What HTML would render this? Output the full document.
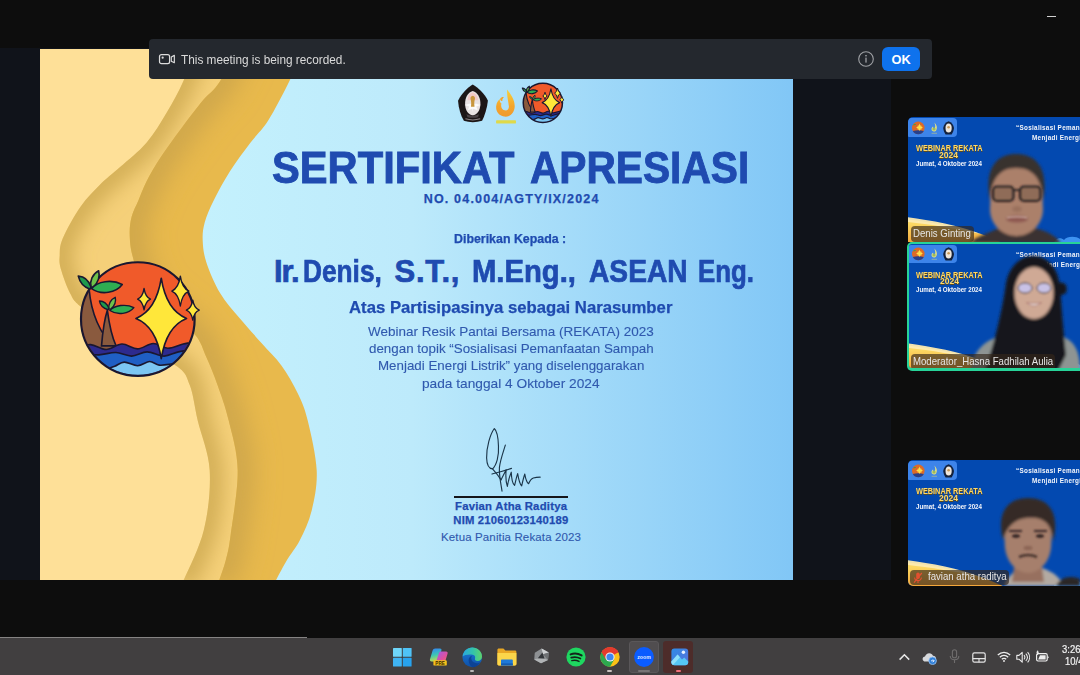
<!DOCTYPE html>
<html lang="id">
<head>
<meta charset="utf-8">
<title>Zoom Meeting</title>
<style>
*{box-sizing:border-box;margin:0;padding:0}
html,body{width:1080px;height:675px;overflow:hidden;background:#0d0d0d;font-family:"Liberation Sans",sans-serif;}
.abs{position:absolute}
#share{left:0;top:48px;width:891px;height:532px;background:#10131a}
#cert{left:40.3px;top:48.5px;width:752.7px;height:531.2px;overflow:hidden;background:#fee098}
#cert svg.bg{position:absolute;left:0;top:0}
.ct{position:absolute;left:0;width:942px;text-align:center;color:#1f4cb0;white-space:nowrap;font-weight:bold}
/* certificate centre x = 511 => in cert coords 471 => width 942 */
#banner{left:149.4px;top:39.4px;width:782.6px;height:39.5px;background:#24282e;border-radius:4px}
#okbtn{left:733px;top:8px;width:37.6px;height:23.2px;border-radius:6px;background:#0e72ed;color:#fff;font-weight:bold;font-size:12.8px;text-align:center;line-height:25px}
#taskbar{left:0;top:637.7px;width:1080px;height:38px;background:#413f40}
.tx{position:absolute;white-space:nowrap;line-height:1;transform-origin:0 0}
.tile{overflow:hidden;background:#0349b0;border-radius:5px}
</style>
</head>
<body>
<div id="share" class="abs"></div>
<div id="cert" class="abs">
<!--CERTBG_S--><svg class="bg" width="753" height="532" viewBox="0 0 753 532">
<defs>
<linearGradient id="gb" x1="0" y1="0" x2="1" y2="0"><stop offset="0" stop-color="#c4f1fd"/><stop offset="0.35" stop-color="#bdeafb"/><stop offset="1" stop-color="#80c6f6"/></linearGradient>
<filter id="bl1" filterUnits="userSpaceOnUse" x="-60" y="-60" width="900" height="700"><feGaussianBlur stdDeviation="10"/></filter>
<filter id="bl2" filterUnits="userSpaceOnUse" x="-60" y="-60" width="900" height="700"><feGaussianBlur stdDeviation="13"/></filter>
<clipPath id="c1"><path d="M157.7 -4.5 C155.3 1.7 148.3 21.2 143.2 32.5 C138.1 43.8 133.0 53.0 126.9 63.2 C120.8 73.4 114.3 84.5 106.5 93.7 C98.7 102.8 87.9 111.0 80.1 118.1 C72.3 125.1 66.3 129.4 59.7 136.0 C53.1 142.6 46.9 148.6 40.7 157.5 C34.5 166.4 26.2 181.3 22.7 189.5 C19.2 197.7 20.0 201.5 19.7 206.5 C19.4 211.5 19.0 213.2 20.7 219.5 C22.5 225.8 26.8 238.1 30.2 244.5 C33.7 250.9 32.3 250.4 41.4 258.2 C50.5 266.0 69.0 281.8 84.7 291.5 C100.4 301.2 124.9 309.1 135.7 316.5 C146.5 323.9 146.0 326.7 149.7 335.9 C153.4 345.1 154.4 357.2 157.7 371.5 C161.0 385.8 168.7 403.2 169.7 421.5 C170.7 439.8 168.4 462.5 163.7 481.5 C159.0 500.5 145.4 526.5 141.7 535.5 L760 540 L760 -5 Z"/></clipPath>
<clipPath id="c2"><path d="M197.7 -4.5 C194.7 1.7 185.9 22.9 179.9 32.5 C173.9 42.1 167.9 45.2 161.5 53.0 C155.1 60.8 148.0 70.3 141.2 79.5 C134.4 88.7 126.6 99.2 120.8 108.0 C115.0 116.8 110.2 125.2 106.5 132.5 C102.8 139.8 100.9 145.7 98.4 151.5 C95.9 157.3 93.2 161.8 91.7 167.5 C90.2 173.2 89.5 178.8 89.7 185.5 C89.9 192.2 90.2 198.2 92.7 207.5 C95.2 216.8 98.5 231.7 104.7 241.5 C110.9 251.3 121.3 259.1 129.7 266.5 C138.1 273.9 149.1 278.9 155.2 285.9 C161.3 292.8 162.7 299.9 166.4 308.2 C170.1 316.5 173.8 325.3 177.5 335.9 C181.2 346.4 185.3 357.2 188.7 371.5 C192.1 385.8 197.4 402.5 197.7 421.5 C198.0 440.5 192.7 470.5 190.7 485.5 C188.7 500.5 187.9 503.2 185.7 511.5 C183.5 519.8 179.0 531.5 177.7 535.5 L760 540 L760 -5 Z"/></clipPath>
</defs>
<rect width="753" height="532" fill="#fee098"/>
<path d="M157.7 -4.5 C155.3 1.7 148.3 21.2 143.2 32.5 C138.1 43.8 133.0 53.0 126.9 63.2 C120.8 73.4 114.3 84.5 106.5 93.7 C98.7 102.8 87.9 111.0 80.1 118.1 C72.3 125.1 66.3 129.4 59.7 136.0 C53.1 142.6 46.9 148.6 40.7 157.5 C34.5 166.4 26.2 181.3 22.7 189.5 C19.2 197.7 20.0 201.5 19.7 206.5 C19.4 211.5 19.0 213.2 20.7 219.5 C22.5 225.8 26.8 238.1 30.2 244.5 C33.7 250.9 32.3 250.4 41.4 258.2 C50.5 266.0 69.0 281.8 84.7 291.5 C100.4 301.2 124.9 309.1 135.7 316.5 C146.5 323.9 146.0 326.7 149.7 335.9 C153.4 345.1 154.4 357.2 157.7 371.5 C161.0 385.8 168.7 403.2 169.7 421.5 C170.7 439.8 168.4 462.5 163.7 481.5 C159.0 500.5 145.4 526.5 141.7 535.5 L760 540 L760 -5 Z" fill="#f5d079"/>
<g clip-path="url(#c1)"><path d="M157.7 -4.5 C155.3 1.7 148.3 21.2 143.2 32.5 C138.1 43.8 133.0 53.0 126.9 63.2 C120.8 73.4 114.3 84.5 106.5 93.7 C98.7 102.8 87.9 111.0 80.1 118.1 C72.3 125.1 66.3 129.4 59.7 136.0 C53.1 142.6 46.9 148.6 40.7 157.5 C34.5 166.4 26.2 181.3 22.7 189.5 C19.2 197.7 20.0 201.5 19.7 206.5 C19.4 211.5 19.0 213.2 20.7 219.5 C22.5 225.8 26.8 238.1 30.2 244.5 C33.7 250.9 32.3 250.4 41.4 258.2 C50.5 266.0 69.0 281.8 84.7 291.5 C100.4 301.2 124.9 309.1 135.7 316.5 C146.5 323.9 146.0 326.7 149.7 335.9 C153.4 345.1 154.4 357.2 157.7 371.5 C161.0 385.8 168.7 403.2 169.7 421.5 C170.7 439.8 168.4 462.5 163.7 481.5 C159.0 500.5 145.4 526.5 141.7 535.5" fill="none" stroke="#d2ad54" stroke-width="26" filter="url(#bl1)"/></g>
<path d="M197.7 -4.5 C194.7 1.7 185.9 22.9 179.9 32.5 C173.9 42.1 167.9 45.2 161.5 53.0 C155.1 60.8 148.0 70.3 141.2 79.5 C134.4 88.7 126.6 99.2 120.8 108.0 C115.0 116.8 110.2 125.2 106.5 132.5 C102.8 139.8 100.9 145.7 98.4 151.5 C95.9 157.3 93.2 161.8 91.7 167.5 C90.2 173.2 89.5 178.8 89.7 185.5 C89.9 192.2 90.2 198.2 92.7 207.5 C95.2 216.8 98.5 231.7 104.7 241.5 C110.9 251.3 121.3 259.1 129.7 266.5 C138.1 273.9 149.1 278.9 155.2 285.9 C161.3 292.8 162.7 299.9 166.4 308.2 C170.1 316.5 173.8 325.3 177.5 335.9 C181.2 346.4 185.3 357.2 188.7 371.5 C192.1 385.8 197.4 402.5 197.7 421.5 C198.0 440.5 192.7 470.5 190.7 485.5 C188.7 500.5 187.9 503.2 185.7 511.5 C183.5 519.8 179.0 531.5 177.7 535.5 L760 540 L760 -5 Z" fill="#e8b94c"/>
<g clip-path="url(#c2)"><path d="M197.7 -4.5 C194.7 1.7 185.9 22.9 179.9 32.5 C173.9 42.1 167.9 45.2 161.5 53.0 C155.1 60.8 148.0 70.3 141.2 79.5 C134.4 88.7 126.6 99.2 120.8 108.0 C115.0 116.8 110.2 125.2 106.5 132.5 C102.8 139.8 100.9 145.7 98.4 151.5 C95.9 157.3 93.2 161.8 91.7 167.5 C90.2 173.2 89.5 178.8 89.7 185.5 C89.9 192.2 90.2 198.2 92.7 207.5 C95.2 216.8 98.5 231.7 104.7 241.5 C110.9 251.3 121.3 259.1 129.7 266.5 C138.1 273.9 149.1 278.9 155.2 285.9 C161.3 292.8 162.7 299.9 166.4 308.2 C170.1 316.5 173.8 325.3 177.5 335.9 C181.2 346.4 185.3 357.2 188.7 371.5 C192.1 385.8 197.4 402.5 197.7 421.5 C198.0 440.5 192.7 470.5 190.7 485.5 C188.7 500.5 187.9 503.2 185.7 511.5 C183.5 519.8 179.0 531.5 177.7 535.5" fill="none" stroke="#cea64b" stroke-width="32" filter="url(#bl2)"/></g>
<path d="M265.7 -4.5 C263.0 1.5 255.9 18.8 249.7 31.5 C243.4 44.2 234.8 61.1 228.2 71.5 C221.6 81.9 216.8 85.2 210.4 93.7 C204.0 102.1 196.1 112.6 190.0 122.2 C183.9 131.8 177.9 142.9 173.7 151.5 C169.5 160.1 166.5 166.8 164.7 173.5 C162.9 180.2 162.4 184.8 162.7 191.5 C163.0 198.2 163.5 204.7 166.4 213.5 C169.3 222.3 174.6 235.0 180.2 244.3 C185.8 253.6 192.8 261.0 199.7 269.3 C206.6 277.6 214.8 286.4 221.7 294.3 C228.6 302.2 235.4 308.2 241.4 316.5 C247.4 324.8 253.3 335.1 257.7 344.3 C262.1 353.5 264.5 358.6 267.7 371.5 C270.9 384.4 276.0 406.5 276.7 421.5 C277.4 436.5 274.5 449.8 271.7 461.5 C268.9 473.2 263.9 483.2 259.7 491.5 C255.5 499.8 251.0 504.2 246.7 511.5 C242.4 518.8 235.9 531.5 233.7 535.5 L760 540 L760 -5 Z" fill="url(#gb)"/>
</svg><!--CERTBG_E-->
<!--CERTLOGO_S--><svg class="abs" style="left:19.7px;top:201.5px" width="160" height="140" viewBox="0 0 771 675">
<defs><clipPath id="brc"><circle cx="375" cy="333" r="270"/></clipPath></defs>
<circle cx="375" cy="333" r="274" fill="#f05a2a"/>
<g clip-path="url(#brc)">
 <path d="M100 200 L140 188 C150 300 190 400 262 470 L262 500 L90 500Z" fill="#8a5a3e" stroke="#1a1730" stroke-width="7.800000000000001"/>
 <path d="M228 290 C236 350 246 410 270 462 L200 462 C205 400 212 340 228 290Z" fill="#8a5a3e" stroke="#1a1730" stroke-width="7.800000000000001"/>
 <path d="M80.0 470.0 C91.3 467.7 123.9 454.7 147.7 456.3 C171.5 457.9 197.9 480.0 223.0 479.5 C248.1 479.0 273.3 453.9 298.5 453.4 C323.7 452.9 348.9 477.1 374.0 476.6 C399.1 476.1 424.8 451.0 449.0 450.5 C473.2 450.0 494.8 473.2 519.0 473.7 C543.2 474.2 568.8 459.0 594.0 453.4 C619.2 447.8 657.3 442.2 670.0 440.0 L670 700 L80 700Z" fill="#2d2a8e" stroke="#1a1730" stroke-width="7.800000000000001"/>
 <path d="M110.0 500.0 C123.0 500.9 161.4 506.6 188.0 505.6 C214.6 504.6 243.3 493.0 269.5 494.0 C295.7 495.0 319.9 511.9 345.0 511.4 C370.1 510.9 393.9 491.0 420.0 491.0 C446.1 491.0 476.3 511.4 501.5 511.4 C526.7 511.4 546.2 496.2 571.0 491.0 C595.8 485.8 636.8 481.8 650.0 480.0 L650 700 L110 700Z" fill="#1f5fc4" stroke="#1a1730" stroke-width="7.800000000000001"/>
 <path d="M220.0 575.0 C227.3 572.6 248.7 566.5 263.7 560.7 C278.7 554.9 291.6 540.9 310.0 540.4 C328.4 539.9 353.7 558.3 374.0 557.8 C394.3 557.3 414.7 538.0 432.0 537.5 C449.3 537.0 460.0 552.9 478.0 555.0 C496.0 557.1 529.7 550.8 540.0 550.0 L540 700 L220 700Z" fill="#7cc6f2" stroke="#1a1730" stroke-width="7.800000000000001"/>
</g>
<circle cx="375" cy="333" r="274" fill="none" stroke="#1a1730" stroke-width="10.4"/>
<path d="M488 136 Q512.4 291.2 610 330 Q512.4 368.8 488 524 Q463.6 368.8 366 330 Q463.6 291.2 488 136Z" fill="#ffe73a" stroke="#1a1730" stroke-width="7.800000000000001" stroke-linejoin="round"/>
<path d="M405 185 Q411.2 226.6 436 237 Q411.2 247.4 405 289 Q398.8 247.4 374 237 Q398.8 226.6 405 185Z" fill="#ffe73a" stroke="#1a1730" stroke-width="6.5" stroke-linejoin="round"/>
<path d="M580 126 Q588.2 183.6 621 198 Q588.2 212.4 580 270 Q571.8 212.4 539 198 Q571.8 183.6 580 126Z" fill="#ffe73a" stroke="#1a1730" stroke-width="6.5" stroke-linejoin="round"/>
<path d="M640 242 Q646.2 280.4 671 290 Q646.2 299.6 640 338 Q633.8 299.6 609 290 Q633.8 280.4 640 242Z" fill="#ffe73a" stroke="#1a1730" stroke-width="6.5" stroke-linejoin="round"/>
<path d="M142 188 C120 180 96 160 88 126 C120 128 140 150 150 180Z" fill="#1f9a4c" stroke="#1a1730" stroke-width="7.800000000000001" stroke-linejoin="round"/>
<path d="M150 178 C142 150 156 116 186 100 C194 130 180 160 160 180Z" fill="#6fc24a" stroke="#1a1730" stroke-width="7.800000000000001" stroke-linejoin="round"/>
<path d="M152 186 C180 150 250 140 300 166 C270 206 200 220 152 186Z" fill="#2fae52" stroke="#1a1730" stroke-width="7.800000000000001" stroke-linejoin="round"/>
<path d="M232 288 C212 282 194 268 190 246 C212 246 228 262 236 282Z" fill="#1f9a4c" stroke="#1a1730" stroke-width="6.5" stroke-linejoin="round"/>
<path d="M236 284 C232 262 244 238 266 228 C272 250 260 272 244 286Z" fill="#6fc24a" stroke="#1a1730" stroke-width="6.5" stroke-linejoin="round"/>
<path d="M240 292 C262 266 318 258 356 278 C332 308 276 316 240 292Z" fill="#2fae52" stroke="#1a1730" stroke-width="6.5" stroke-linejoin="round"/>
</svg><svg class="abs" style="left:475.9px;top:30.1px" width="55.2" height="48.3" viewBox="0 0 771 675">
<defs><clipPath id="src"><circle cx="375" cy="333" r="270"/></clipPath></defs>
<circle cx="375" cy="333" r="274" fill="#f05a2a"/>
<g clip-path="url(#src)">
 <path d="M100 200 L140 188 C150 300 190 400 262 470 L262 500 L90 500Z" fill="#8a5a3e" stroke="#1a1730" stroke-width="15.600000000000001"/>
 <path d="M228 290 C236 350 246 410 270 462 L200 462 C205 400 212 340 228 290Z" fill="#8a5a3e" stroke="#1a1730" stroke-width="15.600000000000001"/>
 <path d="M80.0 470.0 C91.3 467.7 123.9 454.7 147.7 456.3 C171.5 457.9 197.9 480.0 223.0 479.5 C248.1 479.0 273.3 453.9 298.5 453.4 C323.7 452.9 348.9 477.1 374.0 476.6 C399.1 476.1 424.8 451.0 449.0 450.5 C473.2 450.0 494.8 473.2 519.0 473.7 C543.2 474.2 568.8 459.0 594.0 453.4 C619.2 447.8 657.3 442.2 670.0 440.0 L670 700 L80 700Z" fill="#2d2a8e" stroke="#1a1730" stroke-width="15.600000000000001"/>
 <path d="M110.0 500.0 C123.0 500.9 161.4 506.6 188.0 505.6 C214.6 504.6 243.3 493.0 269.5 494.0 C295.7 495.0 319.9 511.9 345.0 511.4 C370.1 510.9 393.9 491.0 420.0 491.0 C446.1 491.0 476.3 511.4 501.5 511.4 C526.7 511.4 546.2 496.2 571.0 491.0 C595.8 485.8 636.8 481.8 650.0 480.0 L650 700 L110 700Z" fill="#1f5fc4" stroke="#1a1730" stroke-width="15.600000000000001"/>
 <path d="M220.0 575.0 C227.3 572.6 248.7 566.5 263.7 560.7 C278.7 554.9 291.6 540.9 310.0 540.4 C328.4 539.9 353.7 558.3 374.0 557.8 C394.3 557.3 414.7 538.0 432.0 537.5 C449.3 537.0 460.0 552.9 478.0 555.0 C496.0 557.1 529.7 550.8 540.0 550.0 L540 700 L220 700Z" fill="#7cc6f2" stroke="#1a1730" stroke-width="15.600000000000001"/>
</g>
<circle cx="375" cy="333" r="274" fill="none" stroke="#1a1730" stroke-width="20.8"/>
<path d="M488 136 Q512.4 291.2 610 330 Q512.4 368.8 488 524 Q463.6 368.8 366 330 Q463.6 291.2 488 136Z" fill="#ffe73a" stroke="#1a1730" stroke-width="15.600000000000001" stroke-linejoin="round"/>
<path d="M405 185 Q411.2 226.6 436 237 Q411.2 247.4 405 289 Q398.8 247.4 374 237 Q398.8 226.6 405 185Z" fill="#ffe73a" stroke="#1a1730" stroke-width="13.0" stroke-linejoin="round"/>
<path d="M580 126 Q588.2 183.6 621 198 Q588.2 212.4 580 270 Q571.8 212.4 539 198 Q571.8 183.6 580 126Z" fill="#ffe73a" stroke="#1a1730" stroke-width="13.0" stroke-linejoin="round"/>
<path d="M640 242 Q646.2 280.4 671 290 Q646.2 299.6 640 338 Q633.8 299.6 609 290 Q633.8 280.4 640 242Z" fill="#ffe73a" stroke="#1a1730" stroke-width="13.0" stroke-linejoin="round"/>
<path d="M142 188 C120 180 96 160 88 126 C120 128 140 150 150 180Z" fill="#1f9a4c" stroke="#1a1730" stroke-width="15.600000000000001" stroke-linejoin="round"/>
<path d="M150 178 C142 150 156 116 186 100 C194 130 180 160 160 180Z" fill="#6fc24a" stroke="#1a1730" stroke-width="15.600000000000001" stroke-linejoin="round"/>
<path d="M152 186 C180 150 250 140 300 166 C270 206 200 220 152 186Z" fill="#2fae52" stroke="#1a1730" stroke-width="15.600000000000001" stroke-linejoin="round"/>
<path d="M232 288 C212 282 194 268 190 246 C212 246 228 262 236 282Z" fill="#1f9a4c" stroke="#1a1730" stroke-width="13.0" stroke-linejoin="round"/>
<path d="M236 284 C232 262 244 238 266 228 C272 250 260 272 244 286Z" fill="#6fc24a" stroke="#1a1730" stroke-width="13.0" stroke-linejoin="round"/>
<path d="M240 292 C262 266 318 258 356 278 C332 308 276 316 240 292Z" fill="#2fae52" stroke="#1a1730" stroke-width="13.0" stroke-linejoin="round"/>
</svg><!--CERTLOGO_E-->
<!--TOPLOGOS_S--><svg class="abs" style="left:409.7px;top:29.5px" width="80" height="52" viewBox="0 0 1038 675">
<defs><filter id="tb" x="-10%" y="-10%" width="120%" height="120%"><feGaussianBlur stdDeviation="5"/></filter>
<linearGradient id="fl" x1="0" y1="0" x2="0" y2="1"><stop offset="0" stop-color="#f7d23a"/><stop offset="0.6" stop-color="#f4a52c"/><stop offset="1" stop-color="#ee9a2e"/></linearGradient></defs>
<g filter="url(#tb)">
<path d="M295 84 C360 120 450 200 492 296 C480 400 450 490 416 556 C340 580 250 580 180 556 C140 490 112 400 104 296 C150 200 230 120 295 84Z" fill="#1e1718"/>
<path d="M295 170 C360 188 398 262 394 345 C390 425 352 478 295 486 C238 478 200 425 196 345 C192 262 230 188 295 170Z" fill="#e9e3e3"/>
<path d="M295 184 C340 196 364 240 362 290 L228 290 C226 240 250 196 295 184Z" fill="#f2c9c6"/>
<path d="M190 350 L250 370 L230 420 L290 400 L295 440 L300 400 L360 420 L340 370 L400 350 L340 335 L250 335Z" fill="#fbfbfb"/>
<path d="M295 230 C318 232 330 256 322 280 C316 300 312 330 318 372 L272 372 C278 330 274 300 268 280 C260 256 272 232 295 230Z" fill="#c8963e"/>
<path d="M215 470 C260 492 330 492 375 470 L365 505 C330 520 260 520 225 505Z" fill="#4a4244"/>
<path d="M200 530 C260 548 330 548 392 530" stroke="#8a8284" stroke-width="14" fill="none"/>
</g>
<g filter="url(#tb)">
<path d="M742 150 C800 230 850 300 838 390 C826 470 760 512 700 500 C630 488 590 430 600 360 C606 318 622 290 650 272 C640 300 650 322 668 330 C656 370 670 410 708 420 C742 428 768 404 764 366 C758 300 736 240 742 150Z" fill="url(#fl)"/>
<path d="M650 272 C664 250 684 244 700 250 C684 262 676 280 680 300 C664 300 652 290 650 272Z" fill="#f4a52c"/>
<rect x="598" y="548" width="258" height="42" rx="6" fill="#dfd94a"/>
</g>
</svg><!--TOPLOGOS_E-->
<!--SIG_S--><svg class="abs" style="left:429.7px;top:371.5px" width="90" height="80" viewBox="0 0 759 675">
<g fill="none" stroke="#1b3549" stroke-width="9.5" stroke-linecap="round" stroke-linejoin="round">
<path d="M205 72 C170 120 138 230 140 320 C142 380 160 410 190 412 C225 380 245 300 240 220 C238 150 225 90 205 72"/>
<path d="M190 412 C215 440 240 470 262 505"/>
<path d="M298 212 C280 270 255 340 248 400 C244 470 262 540 270 600"/>
<path d="M185 456 C240 440 300 425 350 408"/>
<path d="M262 505 C280 470 295 440 305 420 C300 470 305 530 315 560 C322 520 335 470 348 440 C350 490 362 540 376 552 C384 520 392 480 402 452 C410 500 424 545 436 556 C444 520 452 486 462 456 C470 500 482 530 494 538 C504 515 518 496 534 490 C552 484 572 482 592 482"/>
</g></svg>
<div class="abs" style="left:414.2px;top:447.5px;width:113.4px;height:2px;background:#15151a"></div><!--SIG_E-->
<!--CERTTEXT_S--><div class="tx" style="left:231.7px;top:97.4px;font-size:44.5px;font-weight:bold;color:#1f4bb0;-webkit-text-stroke:0.9px #1f4bb0;transform:scaleX(0.9368);">SERTIFIKAT</div>
<div class="tx" style="left:489.9px;top:97.4px;font-size:44.5px;font-weight:bold;color:#1f4bb0;-webkit-text-stroke:0.9px #1f4bb0;transform:scaleX(0.9138);">APRESIASI</div>
<div class="tx" style="left:383.4px;top:144.5px;font-size:12.5px;font-weight:bold;color:#1f4bb0;-webkit-text-stroke:0.25px #1f4bb0;letter-spacing:1.182px;">NO. 04.004/AGTY/IX/2024</div>
<div class="tx" style="left:414.2px;top:185.6px;font-size:11.9px;font-weight:bold;color:#1f4bb0;-webkit-text-stroke:0.25px #1f4bb0;transform:scaleX(1.0416);">Diberikan Kepada :</div>
<div class="tx" style="left:233.6px;top:207.7px;font-size:31px;font-weight:bold;color:#1f4bb0;-webkit-text-stroke:0.7px #1f4bb0;letter-spacing:-0.947px;">Ir.</div>
<div class="tx" style="left:262.9px;top:207.7px;font-size:31px;font-weight:bold;color:#1f4bb0;-webkit-text-stroke:0.7px #1f4bb0;transform:scaleX(0.8470);">Denis,</div>
<div class="tx" style="left:354.3px;top:207.7px;font-size:31px;font-weight:bold;color:#1f4bb0;-webkit-text-stroke:0.7px #1f4bb0;letter-spacing:0.696px;">S.T.,</div>
<div class="tx" style="left:431.3px;top:207.7px;font-size:31px;font-weight:bold;color:#1f4bb0;-webkit-text-stroke:0.7px #1f4bb0;transform:scaleX(0.9436);">M.Eng.,</div>
<div class="tx" style="left:549.1px;top:207.7px;font-size:31px;font-weight:bold;color:#1f4bb0;-webkit-text-stroke:0.7px #1f4bb0;transform:scaleX(0.9086);">ASEAN</div>
<div class="tx" style="left:657.7px;top:207.7px;font-size:31px;font-weight:bold;color:#1f4bb0;-webkit-text-stroke:0.7px #1f4bb0;transform:scaleX(0.8337);">Eng.</div>
<div class="tx" style="left:309.0px;top:251.7px;font-size:16.7px;font-weight:bold;color:#1f4bb0;-webkit-text-stroke:0.25px #1f4bb0;transform:scaleX(1.0019);">Atas Partisipasinya sebagai Narasumber</div>
<div class="tx" style="left:328.0px;top:276.1px;font-size:13.5px;font-weight:normal;color:#3059ae;-webkit-text-stroke:0.12px #3059ae;transform:scaleX(0.9994);">Webinar Resik Pantai Bersama (REKATA) 2023</div>
<div class="tx" style="left:329.0px;top:293.4px;font-size:13.5px;font-weight:normal;color:#3059ae;-webkit-text-stroke:0.12px #3059ae;transform:scaleX(0.9905);">dengan topik “Sosialisasi Pemanfaatan Sampah</div>
<div class="tx" style="left:337.4px;top:310.8px;font-size:13.5px;font-weight:normal;color:#3059ae;-webkit-text-stroke:0.12px #3059ae;transform:scaleX(0.9885);">Menjadi Energi Listrik” yang diselenggarakan</div>
<div class="tx" style="left:381.4px;top:328.4px;font-size:13.5px;font-weight:normal;color:#3059ae;-webkit-text-stroke:0.12px #3059ae;transform:scaleX(1.0155);">pada tanggal 4 Oktober 2024</div>
<div class="tx" style="left:414.7px;top:452.9px;font-size:11.3px;font-weight:bold;color:#1f4bb0;-webkit-text-stroke:0.25px #1f4bb0;letter-spacing:0.247px;">Favian Atha Raditya</div>
<div class="tx" style="left:413.0px;top:466.6px;font-size:11.3px;font-weight:bold;color:#1f4bb0;-webkit-text-stroke:0.25px #1f4bb0;letter-spacing:0.182px;">NIM 21060123140189</div>
<div class="tx" style="left:400.7px;top:483.3px;font-size:11.5px;font-weight:normal;color:#3059ae;-webkit-text-stroke:0.12px #3059ae;letter-spacing:0.132px;">Ketua Panitia Rekata 2023</div>
<!--CERTTEXT_E-->
</div>
<div id="banner" class="abs">
<!--BANNER_S-->
<svg class="abs" style="left:8.8px;top:13.7px" width="19" height="13.3" viewBox="0 0 20 14"><rect x="1.6" y="1.6" width="10.6" height="9.6" rx="2" fill="none" stroke="#dcdcdc" stroke-width="1.3"/><circle cx="4.9" cy="4.9" r="1.15" fill="#dcdcdc"/><path d="M14 4.2 L17.2 2.5 V10.3 L14 8.6 Z" fill="none" stroke="#dcdcdc" stroke-width="1.2" stroke-linejoin="round"/></svg>
<div class="tx" id="bantx" style="left:31.4px;top:14.3px;font-size:12.3px;color:#dadada;transform:scaleX(0.96)">This meeting is being recorded.</div>
<svg class="abs" style="left:708px;top:10.5px" width="18" height="18" viewBox="0 0 18 18"><circle cx="9" cy="9" r="7.3" fill="none" stroke="#9fa1a5" stroke-width="1.1"/><rect x="8.4" y="7.6" width="1.2" height="5" fill="#a9abaf"/><rect x="8.3" y="5" width="1.4" height="1.4" fill="#a9abaf"/></svg>
<div id="okbtn" class="abs">OK</div>
<!--BANNER_E-->
</div>
<!--WINCTL_S--><div class="abs" style="left:1046.5px;top:15.5px;width:9.5px;height:1.2px;background:#d0d0d0"></div><!--WINCTL_E-->
<!--TILES_S--><svg width="0" height="0" style="position:absolute"><defs>
<filter id="fb1" x="-30%" y="-30%" width="160%" height="160%"><feGaussianBlur stdDeviation="1.6"/></filter>
<filter id="fb2" x="-30%" y="-30%" width="160%" height="160%"><feGaussianBlur stdDeviation="0.8"/></filter>
</defs></svg><div class="abs tile" style="left:908.2px;top:116.7px;width:180px;height:125.6px;border-radius:5px 0 0 0">
<div class="abs" style="left:0;top:1.6px;width:48.6px;height:18.6px;background:#3d84ea;border-radius:3px 4px 4px 1px"></div>
<svg class="abs" style="left:0;top:0" width="50" height="22" viewBox="0 0 50 22">
 <circle cx="10.3" cy="10.9" r="6.3" fill="#dd6a28"/><circle cx="11.6" cy="10.6" r="2.6" fill="#f6b23a" opacity="0.8"/><path d="M4.8 14 Q10 12.6 15.8 14 A6.3 6.3 0 0 1 4.8 14Z" fill="#27408c"/><path d="M11.5 6.5 L12.6 9.4 15 10.4 12.6 11.4 11.5 14 10.4 11.4 8 10.4 10.4 9.4Z" fill="#ffe14a"/><path d="M5 8 Q6.5 6.5 8.2 7.2 Q7 8.6 5 8Z" fill="#3aa34a"/>
 <path d="M26.3 5.6 C28.8 8 29.6 10.6 28.4 13 C27.6 14.6 25.4 15.2 24.2 13.8 C22.8 12.2 23.8 10 25.2 9.4 C24.8 10.8 25.6 11.8 26.4 11.4 C27.6 10.8 27.4 8 26.3 5.6Z" fill="#d9dc8a"/><circle cx="26" cy="12" r="1.6" fill="#9dbb58"/><rect x="23.6" y="15.8" width="5.4" height="0.9" fill="#b9c486" opacity="0.7"/>
 <path d="M40.6 4.2 C43.4 5.4 45.6 7.6 46 11 C45.8 13.6 44.8 15.8 43.6 17.4 L37.6 17.4 C36.4 15.8 35.4 13.6 35.2 11 C35.6 7.6 37.8 5.4 40.6 4.2Z" fill="#13213c"/><ellipse cx="40.6" cy="11" rx="3.1" ry="4.6" fill="#efe6da"/><circle cx="40.6" cy="10.2" r="1.3" fill="#c99a5a"/>
</svg>
<div class="tx vt" style="left:8px;top:26.6px;font-size:9.7px;color:#ffd866;font-weight:bold;transform:scaleX(0.756);text-shadow:0.4px 0.6px 0 #5a4a20">WEBINAR REKATA</div>
<div class="tx vt" style="left:31.3px;top:34.2px;font-size:9.2px;color:#ffd866;font-weight:bold;transform:scaleX(0.93);text-shadow:0.4px 0.6px 0 #5a4a20">2024</div>
<div class="tx vt" style="left:8px;top:43.2px;font-size:7.2px;color:#f4f6fb;font-weight:bold;transform:scaleX(0.86)">Jumat, 4 Oktober 2024</div>
<div class="tx vt" style="left:108px;top:7.5px;font-size:7.2px;color:#f4f6fb;font-weight:bold;letter-spacing:0.35px;transform:scaleX(0.88)">“Sosialisasi Pemanfaatan Sampah</div>
<div class="tx vt" style="left:124.3px;top:17.3px;font-size:7.2px;color:#f4f6fb;font-weight:bold;letter-spacing:0.35px;transform:scaleX(0.88)">Menjadi Energi Listrik”</div>

<svg class="abs" style="left:0;top:95px" width="172" height="31" viewBox="0 0 172 31">
 <defs><linearGradient id="swg1" x1="0" y1="0" x2="0" y2="1"><stop offset="0.2" stop-color="#fcd862"/><stop offset="1" stop-color="#f3a63a"/></linearGradient></defs><path d="M0 7.5 C20 10 50 15 73 22 C80 24.6 88 28 95 31 L0 31Z" fill="url(#swg1)"/>
 <path d="M0 5.3 C22 8 52 14 73 22 C50 17 20 12 0 10Z" fill="#fdebb0" opacity="0.95"/>
 <path d="M146 31 C147 26 153 25 156 28 C159 24 168 24 172 27 L172 31Z" fill="#3d93f2"/>
</svg>
<svg class="abs" style="left:0;top:0" width="172" height="126" viewBox="0 0 172 126">
<g filter="url(#fb1)">
 <path d="M62 126 C66 121 74 118.5 82 115 C88 112 92 110.5 98 110 L120 110 C133 111 146 117 153 126Z" fill="#3b3230"/>
 <rect x="97" y="98" width="24" height="16" fill="#9c7460"/>
 <path d="M83 66 C83 50 94 44 108.5 44 C123 44 134 50 134 66 L135 92 C135 108 122 119 108.5 119 C95 119 82 108 82 92Z" fill="#ab806a"/>
 <path d="M82 84 C76 52 88 37 108 37 C129 37 141 52 135 84 C134 64 127 51 108 51 C90 51 83 64 82 84Z" fill="#37302d"/>
 <ellipse cx="109" cy="102" rx="11" ry="3.6" fill="#8d5650"/>
 <ellipse cx="109" cy="92" rx="5" ry="3" fill="#9a705c"/>
</g>
<g filter="url(#fb2)">
 <rect x="85" y="69.5" width="20.5" height="14.5" rx="4" fill="rgba(60,45,40,0.25)" stroke="#2a2224" stroke-width="2.2"/>
 <rect x="112" y="69.5" width="20.5" height="14.5" rx="4" fill="rgba(60,45,40,0.25)" stroke="#2a2224" stroke-width="2.2"/>
 <path d="M105.5 73 H112" stroke="#2a2224" stroke-width="1.8"/>
 <path d="M99 100.6 Q109 99 119 100.6" stroke="#f0dcd4" stroke-width="1.2" fill="none" opacity="0.7"/>
</g>
</svg><div class="abs" style="left:2.6px;top:109.6px;width:63.6px;height:16px;background:rgba(52,38,26,0.66);border-radius:4px"></div><div class="tx" style="left:5.2px;top:112.1px;font-size:10.3px;color:#e6e6e6;transform:scaleX(0.935)">Denis Ginting</div></div><div class="abs" style="left:906.7px;top:241.5px;width:180px;height:129.2px;border-radius:5px;background:#27d398"></div><div class="abs tile" style="left:909.1px;top:244px;width:180px;height:124.4px;border-radius:3px 0 0 3px"><div class="abs" style="left:-0.9px;top:-0.8px;width:172px;height:126px">
<div class="abs" style="left:0;top:1.6px;width:48.6px;height:18.6px;background:#3d84ea;border-radius:3px 4px 4px 1px"></div>
<svg class="abs" style="left:0;top:0" width="50" height="22" viewBox="0 0 50 22">
 <circle cx="10.3" cy="10.9" r="6.3" fill="#dd6a28"/><circle cx="11.6" cy="10.6" r="2.6" fill="#f6b23a" opacity="0.8"/><path d="M4.8 14 Q10 12.6 15.8 14 A6.3 6.3 0 0 1 4.8 14Z" fill="#27408c"/><path d="M11.5 6.5 L12.6 9.4 15 10.4 12.6 11.4 11.5 14 10.4 11.4 8 10.4 10.4 9.4Z" fill="#ffe14a"/><path d="M5 8 Q6.5 6.5 8.2 7.2 Q7 8.6 5 8Z" fill="#3aa34a"/>
 <path d="M26.3 5.6 C28.8 8 29.6 10.6 28.4 13 C27.6 14.6 25.4 15.2 24.2 13.8 C22.8 12.2 23.8 10 25.2 9.4 C24.8 10.8 25.6 11.8 26.4 11.4 C27.6 10.8 27.4 8 26.3 5.6Z" fill="#d9dc8a"/><circle cx="26" cy="12" r="1.6" fill="#9dbb58"/><rect x="23.6" y="15.8" width="5.4" height="0.9" fill="#b9c486" opacity="0.7"/>
 <path d="M40.6 4.2 C43.4 5.4 45.6 7.6 46 11 C45.8 13.6 44.8 15.8 43.6 17.4 L37.6 17.4 C36.4 15.8 35.4 13.6 35.2 11 C35.6 7.6 37.8 5.4 40.6 4.2Z" fill="#13213c"/><ellipse cx="40.6" cy="11" rx="3.1" ry="4.6" fill="#efe6da"/><circle cx="40.6" cy="10.2" r="1.3" fill="#c99a5a"/>
</svg>
<div class="tx vt" style="left:8px;top:26.6px;font-size:9.7px;color:#ffd866;font-weight:bold;transform:scaleX(0.756);text-shadow:0.4px 0.6px 0 #5a4a20">WEBINAR REKATA</div>
<div class="tx vt" style="left:31.3px;top:34.2px;font-size:9.2px;color:#ffd866;font-weight:bold;transform:scaleX(0.93);text-shadow:0.4px 0.6px 0 #5a4a20">2024</div>
<div class="tx vt" style="left:8px;top:43.2px;font-size:7.2px;color:#f4f6fb;font-weight:bold;transform:scaleX(0.86)">Jumat, 4 Oktober 2024</div>
<div class="tx vt" style="left:108px;top:7.5px;font-size:7.2px;color:#f4f6fb;font-weight:bold;letter-spacing:0.35px;transform:scaleX(0.88)">“Sosialisasi Pemanfaatan Sampah</div>
<div class="tx vt" style="left:124.3px;top:17.3px;font-size:7.2px;color:#f4f6fb;font-weight:bold;letter-spacing:0.35px;transform:scaleX(0.88)">Menjadi Energi Listrik”</div>

<svg class="abs" style="left:0;top:95px" width="172" height="31" viewBox="0 0 172 31">
 <defs><linearGradient id="swg2" x1="0" y1="0" x2="0" y2="1"><stop offset="0.2" stop-color="#fcd862"/><stop offset="1" stop-color="#f3a63a"/></linearGradient></defs><path d="M0 7.5 C20 10 50 15 73 22 C80 24.6 88 28 95 31 L0 31Z" fill="url(#swg2)"/>
 <path d="M0 5.3 C22 8 52 14 73 22 C50 17 20 12 0 10Z" fill="#fdebb0" opacity="0.95"/>
 <path d="M146 31 C147 26 153 25 156 28 C159 24 168 24 172 27 L172 31Z" fill="#3d93f2"/>
</svg>
<svg class="abs" style="left:0;top:0" width="172" height="128" viewBox="0 0 172 128">
<g filter="url(#fb1)">
 <path d="M62 128 C66 104 80 96 96 92 L150 92 C164 96 172 104 172 128Z" fill="#8e9493"/>
 <path d="M76 128 C84 110 94 70 98 40 C102 20 116 12 126 13 C140 14 150 24 152 44 C154 70 156 96 158 112 L150 128Z" fill="#17161a"/>
 <ellipse cx="126" cy="50" rx="19.5" ry="26" fill="#cfa995"/>
 <path d="M150 40 C158 38 160 44 158 50 L150 54Z" fill="#17161a"/>
</g>
<g filter="url(#fb2)">
 <ellipse cx="117" cy="45" rx="7" ry="5" fill="#c9c2e6" stroke="#3a3340" stroke-width="1"/>
 <ellipse cx="136" cy="45" rx="7" ry="5" fill="#c9c2e6" stroke="#3a3340" stroke-width="1"/>
 <path d="M118.5 59.6 Q126 66 133.5 59.6 Q126 61.6 118.5 59.6Z" fill="#f6efec" stroke="#a9726a" stroke-width="0.9"/>
</g>
</svg><div class="abs" style="left:2.6px;top:111px;width:144.6px;height:15.6px;background:rgba(52,38,26,0.66);border-radius:4px"></div><div class="tx" style="left:5.2px;top:113.4px;font-size:10.3px;color:#e6e6e6;transform:scaleX(0.935)">Moderator_Hasna Fadhilah Aulia</div></div></div><div class="abs tile" style="left:908.2px;top:459.6px;width:180px;height:126px;border-radius:5px 0 0 5px">
<div class="abs" style="left:0;top:1.6px;width:48.6px;height:18.6px;background:#3d84ea;border-radius:3px 4px 4px 1px"></div>
<svg class="abs" style="left:0;top:0" width="50" height="22" viewBox="0 0 50 22">
 <circle cx="10.3" cy="10.9" r="6.3" fill="#dd6a28"/><circle cx="11.6" cy="10.6" r="2.6" fill="#f6b23a" opacity="0.8"/><path d="M4.8 14 Q10 12.6 15.8 14 A6.3 6.3 0 0 1 4.8 14Z" fill="#27408c"/><path d="M11.5 6.5 L12.6 9.4 15 10.4 12.6 11.4 11.5 14 10.4 11.4 8 10.4 10.4 9.4Z" fill="#ffe14a"/><path d="M5 8 Q6.5 6.5 8.2 7.2 Q7 8.6 5 8Z" fill="#3aa34a"/>
 <path d="M26.3 5.6 C28.8 8 29.6 10.6 28.4 13 C27.6 14.6 25.4 15.2 24.2 13.8 C22.8 12.2 23.8 10 25.2 9.4 C24.8 10.8 25.6 11.8 26.4 11.4 C27.6 10.8 27.4 8 26.3 5.6Z" fill="#d9dc8a"/><circle cx="26" cy="12" r="1.6" fill="#9dbb58"/><rect x="23.6" y="15.8" width="5.4" height="0.9" fill="#b9c486" opacity="0.7"/>
 <path d="M40.6 4.2 C43.4 5.4 45.6 7.6 46 11 C45.8 13.6 44.8 15.8 43.6 17.4 L37.6 17.4 C36.4 15.8 35.4 13.6 35.2 11 C35.6 7.6 37.8 5.4 40.6 4.2Z" fill="#13213c"/><ellipse cx="40.6" cy="11" rx="3.1" ry="4.6" fill="#efe6da"/><circle cx="40.6" cy="10.2" r="1.3" fill="#c99a5a"/>
</svg>
<div class="tx vt" style="left:8px;top:26.6px;font-size:9.7px;color:#ffd866;font-weight:bold;transform:scaleX(0.756);text-shadow:0.4px 0.6px 0 #5a4a20">WEBINAR REKATA</div>
<div class="tx vt" style="left:31.3px;top:34.2px;font-size:9.2px;color:#ffd866;font-weight:bold;transform:scaleX(0.93);text-shadow:0.4px 0.6px 0 #5a4a20">2024</div>
<div class="tx vt" style="left:8px;top:43.2px;font-size:7.2px;color:#f4f6fb;font-weight:bold;transform:scaleX(0.86)">Jumat, 4 Oktober 2024</div>
<div class="tx vt" style="left:108px;top:7.5px;font-size:7.2px;color:#f4f6fb;font-weight:bold;letter-spacing:0.35px;transform:scaleX(0.88)">“Sosialisasi Pemanfaatan Sampah</div>
<div class="tx vt" style="left:124.3px;top:17.3px;font-size:7.2px;color:#f4f6fb;font-weight:bold;letter-spacing:0.35px;transform:scaleX(0.88)">Menjadi Energi Listrik”</div>

<svg class="abs" style="left:0;top:95px" width="172" height="31" viewBox="0 0 172 31">
 <defs><linearGradient id="swg3" x1="0" y1="0" x2="0" y2="1"><stop offset="0.2" stop-color="#fcd862"/><stop offset="1" stop-color="#f3a63a"/></linearGradient></defs><path d="M0 7.5 C20 10 50 15 73 22 C80 24.6 88 28 95 31 L0 31Z" fill="url(#swg3)"/>
 <path d="M0 5.3 C22 8 52 14 73 22 C50 17 20 12 0 10Z" fill="#fdebb0" opacity="0.95"/>
 <path d="M146 31 C147 26 153 25 156 28 C159 24 168 24 172 27 L172 31Z" fill="#3d93f2"/>
</svg>
<svg class="abs" style="left:0;top:0" width="172" height="126" viewBox="0 0 172 126">
<g filter="url(#fb1)">
 <path d="M96 126 C100 116 106 111 112 109 L134 108 C146 112 152 118 156 126Z" fill="#b3aaa2"/>
 <path d="M148 126 C152 117 162 115 172 119 L172 126Z" fill="#2c2827"/>
 <path d="M107 100 H133 L136 122 H104Z" fill="#97705f"/>
 <path d="M96 70 C96 56 106 50 120 50 C134 50 144 56 144 70 L143 88 C141 104 130 113 120 113 C110 113 99 104 97 88Z" fill="#a67f6c"/>
 <path d="M95 80 C88 52 100 38 120 38 C142 38 152 54 145 82 C144 68 140 60 128 58 C112 56 100 62 95 80Z" fill="#352a26"/>
</g>
<g filter="url(#fb2)">
 <path d="M101 71 H114 M126 71 H139" stroke="#3a2a26" stroke-width="2"/>
 <ellipse cx="108" cy="76" rx="4" ry="1.8" fill="#2d2320"/><ellipse cx="132" cy="76" rx="4" ry="1.8" fill="#2d2320"/>
 <ellipse cx="120" cy="88" rx="4.5" ry="2.2" fill="#8d6656"/>
 <path d="M111 97 Q120 93 129 97" stroke="#4a352f" stroke-width="2.6" fill="none"/>
</g>
</svg><div class="abs" style="left:2px;top:110.4px;width:99px;height:14.6px;background:rgba(52,38,26,0.66);border-radius:4px"></div><svg class="abs" style="left:5px;top:112.4px" width="10" height="12" viewBox="0 0 10 12"><rect x="3.2" y="0.6" width="3.6" height="6.4" rx="1.8" fill="#e2502f"/><path d="M1.6 5.6 C1.6 9.6 8.4 9.6 8.4 5.6 M5 8.8 V11" stroke="#e2502f" stroke-width="1.1" fill="none"/><path d="M1 10.6 L8.8 1" stroke="#e2502f" stroke-width="1.2"/></svg><div class="tx" style="left:19.6px;top:112.3px;font-size:10.3px;color:#e6e6e6;transform:scaleX(0.935)">favian atha raditya</div></div><!--TILES_E-->
<div id="taskbar" class="abs">
<!--TASKBAR_S--><div class="abs" style="left:0;top:-0.7px;width:307px;height:1px;background:#858383"></div><svg class="abs" style="left:393px;top:10.1px" width="19" height="19" viewBox="0 0 19 19">
<defs><linearGradient id="wg" x1="0" y1="0" x2="1" y2="1"><stop offset="0" stop-color="#7fe0fb"/><stop offset="1" stop-color="#1d9ff0"/></linearGradient></defs>
<rect x="0" y="0" width="8.8" height="8.8" rx="0.6" fill="#6fd6fa"/><rect x="9.8" y="0" width="8.8" height="8.8" rx="0.6" fill="#4fc3f7"/><rect x="0" y="9.8" width="8.8" height="8.8" rx="0.6" fill="#3fb4f4"/><rect x="9.8" y="9.8" width="8.8" height="8.8" rx="0.6" fill="#27a3ef"/></svg><svg class="abs" style="left:428.5px;top:9.7px" width="20" height="20" viewBox="0 0 20 20">
<defs><linearGradient id="cp1" x1="0.3" y1="0" x2="0.5" y2="1"><stop offset="0" stop-color="#3388f2"/><stop offset="0.5" stop-color="#3cc6b4"/><stop offset="1" stop-color="#c9dc4a"/></linearGradient>
<linearGradient id="cp2" x1="0" y1="0" x2="1" y2="1"><stop offset="0" stop-color="#9a5cf0"/><stop offset="0.6" stop-color="#e0509a"/><stop offset="1" stop-color="#f08a4a"/></linearGradient></defs>
<path d="M6.2 1.6 H11 C12.2 1.6 12.8 2.4 12.4 3.6 L9.6 12.4 C9.2 13.6 8.2 14.4 7 14.4 H2.6 C1.2 14.4 0.6 13.4 1 12.2 L3.6 3.6 C4 2.4 5 1.6 6.2 1.6Z" fill="url(#cp1)"/>
<path d="M12.6 4.4 H17 C18.4 4.4 19 5.4 18.6 6.6 L16.2 14.6 C15.8 15.8 14.8 16.6 13.6 16.6 H8.6 C7.4 16.6 6.8 15.8 7.2 14.6 L10 5.8 C10.3 4.9 11.4 4.4 12.6 4.4Z" fill="url(#cp2)"/>
<rect x="4.4" y="13.2" width="13.4" height="5.4" rx="1.2" fill="#f6c21c"/>
<text x="11.1" y="17.6" font-family="Liberation Sans, sans-serif" font-weight="bold" font-size="4.6" text-anchor="middle" fill="#3a2a00">PRE</text></svg><svg class="abs" style="left:462px;top:9.2px" width="21" height="21" viewBox="0 0 21 21">
<defs><linearGradient id="eg1" x1="0" y1="0" x2="1" y2="0"><stop offset="0" stop-color="#2aa8e0"/><stop offset="0.55" stop-color="#34c3a8"/><stop offset="1" stop-color="#5fd46a"/></linearGradient>
<linearGradient id="eg2" x1="0" y1="0" x2="0" y2="1"><stop offset="0" stop-color="#1f7ed8"/><stop offset="1" stop-color="#0c4fa8"/></linearGradient></defs>
<circle cx="10.3" cy="10.4" r="9.8" fill="url(#eg2)"/>
<path d="M0.6 9.6 C1 4.4 5.2 0.6 10.3 0.6 C15.8 0.6 20 4.8 20 9.4 C20 12.2 18 14 15.6 14 C13.4 14 12.6 12.8 13 11.6 C13.4 10.4 13.2 8.2 10.6 7.8 C6.8 7.2 2 8 0.6 9.6Z" fill="url(#eg1)"/>
<path d="M6.6 13.2 C6.6 10.4 8.6 8.6 10.6 8.4 C8.4 9.6 8.8 13.6 12.2 15.6 C14.4 16.8 17 16.2 18.4 15 C16.6 18.6 13.6 20.2 10.3 20.2 C8.4 18.8 6.6 16.4 6.6 13.2Z" fill="#0d3f8f" opacity="0.85"/>
</svg><div class="abs" style="left:470px;top:32.1px;width:4.4px;height:1.8px;border-radius:1px;background:#b9b7b7"></div><svg class="abs" style="left:496.5px;top:10.3px" width="20" height="18" viewBox="0 0 20 18">
<path d="M0.4 2 C0.4 1.2 1 0.6 1.8 0.6 H6.4 L8.4 2.6 H18 C18.8 2.6 19.4 3.2 19.4 4 V16 C19.4 16.8 18.8 17.4 18 17.4 H1.8 C1 17.4 0.4 16.8 0.4 16Z" fill="#e9a824"/>
<path d="M0.4 5 H19.4 V16 C19.4 16.8 18.8 17.4 18 17.4 H1.8 C1 17.4 0.4 16.8 0.4 16Z" fill="#fbd64a"/>
<path d="M4 17.4 V12.6 C4 12 4.4 11.6 5 11.6 H14.8 C15.4 11.6 15.8 12 15.8 12.6 V17.4Z" fill="#1f79d6"/>
<rect x="4" y="15.4" width="11.8" height="2" fill="#155cb0"/></svg><svg class="abs" style="left:532.5px;top:10.3px" width="17" height="16" viewBox="0 0 17 16">
<path d="M8.6 0.6 L15.8 4.6 L15 12 L8 15.2 L1.2 11.6 L1.8 4.8Z" fill="#8d9093"/>
<path d="M8.6 0.6 L15.8 4.6 L10 6.2Z" fill="#cfd2d4"/><path d="M15.8 4.6 L15 12 L10 6.2Z" fill="#6e7174"/>
<path d="M4.6 10.6 L9.4 4.4 L11.6 10.8Z" fill="#34373b"/><path d="M1.2 11.6 L8 15.2 L15 12 L11.6 10.8 L4.6 10.6Z" fill="#b1b4b6"/></svg><svg class="abs" style="left:565.5px;top:9.2px" width="20" height="20" viewBox="0 0 20 20">
<circle cx="10" cy="10" r="9.6" fill="#1ed760"/>
<path d="M4.6 7.4 C8 6.2 12.4 6.6 15.6 8.4" stroke="#14251a" stroke-width="2" fill="none" stroke-linecap="round"/>
<path d="M5.2 10.6 C8 9.8 11.6 10 14.4 11.6" stroke="#14251a" stroke-width="1.7" fill="none" stroke-linecap="round"/>
<path d="M5.8 13.6 C8.2 13 10.8 13.2 13 14.4" stroke="#14251a" stroke-width="1.4" fill="none" stroke-linecap="round"/></svg><svg class="abs" style="left:600px;top:9.7px" width="20" height="20" viewBox="0 0 20 20">
<circle cx="10" cy="10" r="9.7" fill="#fbc116"/>
<path d="M10 10 L1.6 5.15 A9.7 9.7 0 0 1 18.4 5.15 Z" fill="#e33b2e"/>
<path d="M10 10 L1.6 5.15 A9.7 9.7 0 0 0 10 19.7 L14.2 12.4Z" fill="#2da94f"/>
<path d="M10 5.4 H18.5 A9.7 9.7 0 0 0 1.6 5.15 L5.8 12.4Z" fill="#e33b2e"/>
<circle cx="10" cy="10" r="4.6" fill="#f3f5f7"/><circle cx="10" cy="10" r="3.6" fill="#3f86ee"/></svg><div class="abs" style="left:607.4px;top:32.1px;width:4.8px;height:1.8px;border-radius:1px;background:#c9c2bf"></div><div class="abs" style="left:629px;top:3.7px;width:30.4px;height:31.6px;border-radius:3px;background:#504d4f;border:1px solid #5a5759"></div><svg class="abs" style="left:634px;top:9.3px" width="20" height="20" viewBox="0 0 20 20"><circle cx="10" cy="10" r="9.9" fill="#0b5cff"/>
<text x="10" y="11.6" font-family="Liberation Sans, sans-serif" font-weight="bold" font-size="5.2" text-anchor="middle" fill="#dfe9ff">zoom</text></svg><div class="abs" style="left:637.6px;top:32.1px;width:12.6px;height:1.8px;border-radius:1px;background:#777475"></div><div class="abs" style="left:663.4px;top:3.7px;width:30px;height:31.6px;border-radius:3px;background:#4d2c2a"></div><svg class="abs" style="left:670.6px;top:10.3px" width="18" height="18" viewBox="0 0 18 18">
<defs><linearGradient id="ph" x1="0" y1="0" x2="1" y2="1"><stop offset="0" stop-color="#2e8de8"/><stop offset="1" stop-color="#5a6fd8"/></linearGradient></defs>
<rect x="0.4" y="0.4" width="16.8" height="16.8" rx="3" fill="url(#ph)"/>
<circle cx="12.4" cy="4.2" r="1.7" fill="#e8f2ff"/>
<path d="M0.4 13.4 L6.6 6.6 L11 11.4 L13.2 9.4 L17.2 13.4 V14.2 C17.2 15.9 15.9 17.2 14.2 17.2 H3.4 C1.7 17.2 0.4 15.9 0.4 14.2Z" fill="#55c6f5"/>
<path d="M0.4 13.4 L6.6 6.6 L9 9.2 L2.2 16.8 C1.1 16.3 0.4 15.3 0.4 14.2Z" fill="#8fe0fb"/></svg><div class="abs" style="left:676px;top:32.1px;width:5px;height:1.8px;border-radius:1px;background:#f0707a"></div><svg class="abs" style="left:898px;top:14.7px" width="13" height="10" viewBox="0 0 13 10"><path d="M1.6 7.6 L6.4 2.8 L11.2 7.6" stroke="#e8e8e8" stroke-width="1.5" fill="none"/></svg><svg class="abs" style="left:922px;top:14.1px" width="16" height="13" viewBox="0 0 16 13">
<path d="M3.6 9.6 C1.6 9.6 0.6 8.4 0.6 7 C0.6 5.6 1.6 4.6 3 4.6 C3.6 2.6 5.2 1.2 7.2 1.2 C9 1.2 10.4 2.2 11 3.8 C12.8 3.8 14 5 14 6.6 C14 8.4 12.8 9.6 11 9.6Z" fill="#d7d9dc"/>
<circle cx="10.6" cy="8.8" r="3.8" fill="#2f7fd8"/><circle cx="10.6" cy="8.8" r="3.8" fill="none" stroke="#9cc4f2" stroke-width="0.8"/>
<path d="M9 8.8 H12.2 M10.8 7.4 L12.2 8.8 L10.8 10.2" stroke="#e8f1ff" stroke-width="0.9" fill="none"/></svg><svg class="abs" style="left:948.6px;top:11.7px" width="11" height="15" viewBox="0 0 11 15"><rect x="3.4" y="0.8" width="4.2" height="8" rx="2.1" fill="none" stroke="#6f6d6d" stroke-width="1.1"/><path d="M1.2 7 C1.2 12 9.8 12 9.8 7 M5.5 10.8 V14" stroke="#6f6d6d" stroke-width="1.1" fill="none"/></svg><svg class="abs" style="left:972px;top:13.9px" width="14" height="11" viewBox="0 0 14 11"><rect x="0.8" y="0.8" width="12.4" height="9.4" rx="1.6" fill="none" stroke="#e4e4e4" stroke-width="1.2"/><path d="M0.8 6.6 H13.2 M7 6.6 V10.2" stroke="#e4e4e4" stroke-width="1.1"/></svg><svg class="abs" style="left:997.4px;top:13.5px" width="14" height="11" viewBox="0 0 14 11"><path d="M0.8 4 C4.4 0.4 9.6 0.4 13.2 4" stroke="#ececec" stroke-width="1.25" fill="none"/><path d="M2.8 6.2 C5.2 3.8 8.8 3.8 11.2 6.2" stroke="#ececec" stroke-width="1.25" fill="none"/><path d="M4.8 8.2 C6 7 8 7 9.2 8.2" stroke="#ececec" stroke-width="1.25" fill="none"/><circle cx="7" cy="10" r="0.95" fill="#ececec"/></svg><svg class="abs" style="left:1016.4px;top:13.5px" width="14" height="13" viewBox="0 0 14 13"><path d="M0.8 4.4 H3 L6.2 1.4 V11.2 L3 8.2 H0.8Z" fill="none" stroke="#ececec" stroke-width="1.1" stroke-linejoin="round"/><path d="M8 4.2 C9 5.4 9 7.2 8 8.4 M9.8 2.6 C11.8 4.8 11.8 7.8 9.8 10 M11.6 1.2 C14.2 4.2 14.2 8.4 11.6 11.4" stroke="#ececec" stroke-width="1.05" fill="none"/></svg><svg class="abs" style="left:1034.6px;top:12.3px" width="15" height="12" viewBox="0 0 15 12"><rect x="1.6" y="3.6" width="10.6" height="7.4" rx="1.4" fill="none" stroke="#f0f0f0" stroke-width="1.15"/><path d="M12.6 5.8 L13.9 7.3 L12.6 8.8Z" fill="#f0f0f0"/><path d="M3.2 9.6 L5 5.2 H10.6 V9.6Z" fill="#ededed"/><path d="M2.6 0.6 V5 M1.4 2.2 H3.8" stroke="#f0f0f0" stroke-width="1"/></svg><div class="tx" style="left:1062px;top:7.1px;font-size:10.4px;color:#f2f2f2;-webkit-text-stroke:0.2px #f2f2f2;transform:scaleX(0.91)">3:26:41 PM</div><div class="tx" style="left:1064.8px;top:19.6px;font-size:10.4px;color:#f2f2f2;-webkit-text-stroke:0.2px #f2f2f2;transform:scaleX(0.91)">10/4/2024</div><!--TASKBAR_E-->
</div>
</body>
</html>
